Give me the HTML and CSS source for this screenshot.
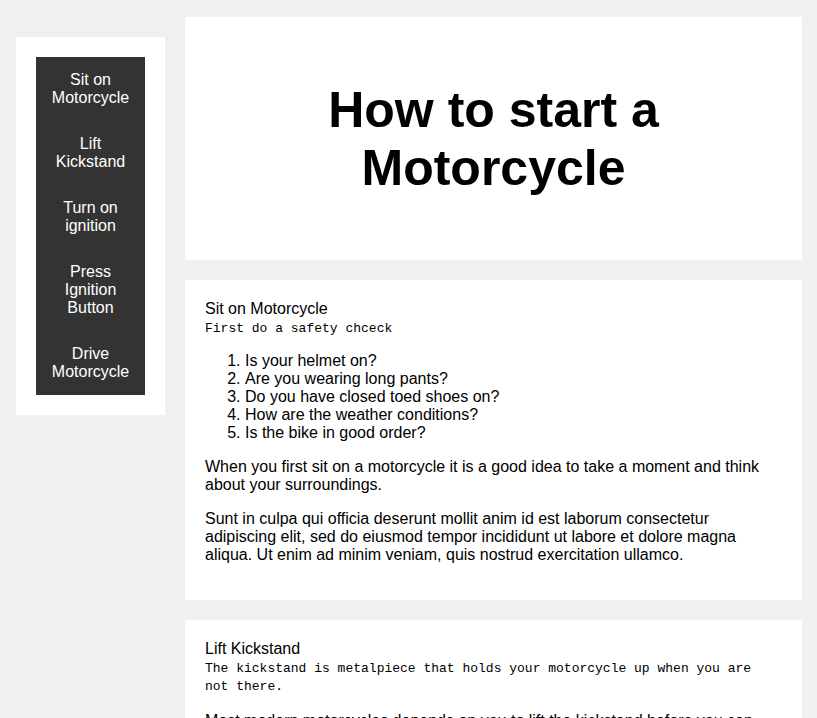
FILE: index.html
```html
<!DOCTYPE html>
<html lang="en">
<head>
<meta charset="utf-8">
<title>How to start a Motorcycle</title>
<link rel="stylesheet" href="styles.css">
</head>
<body>
<div class="page">
  <nav class="navbar">
    <ul class="nav-list">
      <li><a class="nav-link" href="#Sit_on_Motorcycle">Sit on Motorcycle</a></li>
      <li><a class="nav-link" href="#Lift_Kickstand">Lift Kickstand</a></li>
      <li><a class="nav-link" href="#Turn_on_ignition">Turn on ignition</a></li>
      <li><a class="nav-link" href="#Press_Ignition_Button">Press Ignition Button</a></li>
      <li><a class="nav-link" href="#Drive_Motorcycle">Drive Motorcycle</a></li>
    </ul>
  </nav>
  <main class="main">
    <header class="title-card">
      <h1 class="title">How to start a Motorcycle</h1>
    </header>
    <section class="section" id="Sit_on_Motorcycle">
      <header class="section-title">Sit on Motorcycle</header>
      <code class="code">First do a safety chceck</code>
      <ol class="list">
        <li>Is your helmet on?</li>
        <li>Are you wearing long pants?</li>
        <li>Do you have closed toed shoes on?</li>
        <li>How are the weather conditions?</li>
        <li>Is the bike in good order?</li>
      </ol>
      <p>When you first sit on a motorcycle it is a good idea to take a moment and think about your surroundings.</p>
      <p>Sunt in culpa qui officia deserunt mollit anim id est laborum consectetur adipiscing elit, sed do eiusmod tempor incididunt ut labore et dolore magna aliqua. Ut enim ad minim veniam, quis nostrud exercitation ullamco.</p>
    </section>
    <section class="section" id="Lift_Kickstand">
      <header class="section-title">Lift Kickstand</header>
      <code class="code">The kickstand is metalpiece that holds your motorcycle up when you are not there.</code>
      <p>Most modern motorcycles depends on you to lift the kickstand before you can start the engine. Sunt in culpa qui officia deserunt mollit anim id est laborum.</p>
    </section>
  </main>
</div>
</body>
</html>
```
FILE: styles.css
```css
html, body {
  margin: 0;
  padding: 0;
}
body {
  background: #f0f0f0;
  color: #000;
  font-family: "Liberation Sans", Arial, sans-serif;
  font-size: 16px;
}
.page {
  display: flex;
  align-items: flex-start;
  gap: 20px;
  padding: 17px 15px 0 16px;
}
.navbar {
  flex: 0 0 149px;
  box-sizing: border-box;
  margin-top: 20px;
  padding: 20px;
  background: #fff;
}
.nav-list {
  list-style: none;
  margin: 0;
  padding: 0;
  background: #333;
}
.nav-link {
  display: block;
  padding: 14px 14px;
  color: #fff;
  text-align: center;
  text-decoration: none;
}
.main {
  flex: 1;
  display: flex;
  flex-direction: column;
  gap: 20px;
  min-width: 0;
}
.title-card {
  background: #fff;
  height: 243px;
  display: flex;
  align-items: center;
  justify-content: center;
}
.title {
  margin: 0;
  font-size: 50px;
  font-weight: bold;
  text-align: center;
  width: 360px;
}
.section {
  background: #fff;
  padding: 20px 20px 20px;
}
.section-title {
  display: block;
  margin-bottom: 2px;
}
.code {
  display: block;
  font-family: "Liberation Mono", "Courier New", monospace;
  font-size: 13px;
  line-height: 18px;
}
.list {
  margin: 14px 0 16px;
  padding-left: 40px;
}
.section p {
  margin: 16px 0;
}
```
